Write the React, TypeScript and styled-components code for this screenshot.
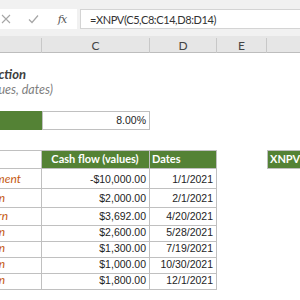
import React from "react";
import styled, { createGlobalStyle } from "styled-components";

const GREEN = "#548235";
const GRID = "#c0c0c0";

const GlobalStyle = createGlobalStyle`
  html, body { margin: 0; padding: 0; background: #ffffff; }
  body { font-family: Lato, "Open Sans", sans-serif; width: 300px; height: 300px; overflow: hidden; }
`;

const Page = styled.div`
  width: 300px;
  height: 300px;
  overflow: hidden;
  display: flex;
  flex-direction: column;
`;

const FormulaBar = styled.div`
  height: 36px;
  background: #f1f1f1;
  display: flex;
  align-items: flex-start;
  padding-top: 9px;
  box-sizing: border-box;
`;

const IconBox = styled.div`
  width: 77px;
  height: 20px;
  background: #ffffff;
  display: flex;
  align-items: center;
  justify-content: flex-start;
`;

const IconSlot = styled.div<{ $w: number }>`
  width: ${(p) => p.$w}px;
  display: flex;
  align-items: center;
  justify-content: center;
`;

const Fx = styled.span`
  font-family: "DejaVu Serif", "Liberation Serif", serif;
  font-style: italic;
  font-size: 11px;
  color: #555555;
  letter-spacing: -1px;
`;

const FormulaInput = styled.div`
  flex: 1;
  height: 20px;
  margin-left: 3px;
  background: #ffffff;
  border: 1px solid #d4d4d4;
  border-right: none;
  box-sizing: border-box;
  display: flex;
  align-items: center;
  padding-left: 9px;
  font-size: 11px;
  letter-spacing: -0.4px;
  color: #333333;
  white-space: nowrap;
`;

const COLS = "42px 108px 67px 50px 1fr";

const HeaderRow = styled.div`
  display: grid;
  grid-template-columns: ${COLS};
  height: 17px;
  background: #e6e6e6;
  border-bottom: 1px solid #bdbdbd;
  box-sizing: border-box;
`;

const ColHead = styled.div`
  border-right: 1px solid #c8c8c8;
  margin: 2px 0 0 0;
  display: flex;
  align-items: center;
  justify-content: center;
  font-size: 12px;
  color: #444444;
  &:last-child { border-right: none; }
`;

const Row = styled.div<{ $h: number }>`
  display: grid;
  grid-template-columns: ${COLS};
  height: ${(p) => p.$h}px;
`;

const Cell = styled.div<{ $fill?: string; $r?: boolean; $b?: boolean; $t?: boolean; $l?: boolean }>`
  box-sizing: border-box;
  background: ${(p) => p.$fill || "transparent"};
  border-right: ${(p) => (p.$r ? `1px solid ${GRID}` : "none")};
  border-bottom: ${(p) => (p.$b ? `1px solid ${GRID}` : "none")};
  border-top: ${(p) => (p.$t ? `1px solid ${GRID}` : "none")};
  border-left: ${(p) => (p.$l ? `1px solid ${GRID}` : "none")};
  display: flex;
  align-items: flex-end;
  padding: 0 3px 2px 3px;
  font-size: 12px;
  line-height: 14px;
  color: #222222;
  white-space: nowrap;
  overflow: hidden;
`;

const NumberCell = styled(Cell)`
  justify-content: flex-end;
  font-family: "Liberation Sans", Arial, sans-serif;
  font-size: 10.5px;
  color: #1e1e1e;
`;

const HeadCell = styled(Cell)<{ $center?: boolean }>`
  color: #ffffff;
  font-weight: 700;
  font-size: 11px;
  padding-left: 2px;
  justify-content: ${(p) => (p.$center ? "center" : "flex-start")};
`;

const LabelCell = styled(Cell)<{ $end: number }>`
  justify-content: flex-end;
  padding-left: 0;
  padding-right: ${(p) => 41 - p.$end}px;
  color: #c65911;
  font-style: italic;
`;

const Overhang = styled.div<{ $end: number }>`
  grid-column: 1 / span 3;
  width: ${(p) => p.$end}px;
  display: flex;
  justify-content: flex-end;
  align-items: flex-end;
  overflow: hidden;
  white-space: nowrap;
  padding-bottom: 1px;
`;

const Title = styled.span`
  font-weight: 700;
  font-style: italic;
  font-size: 13px;
  color: #404040;
`;

const Subtitle = styled.span`
  font-style: italic;
  font-size: 12.5px;
  color: #7f7f7f;
`;

const data = [
  { label: "Initial investment", end: 21, value: "-$10,000.00", date: "1/1/2021", h: 20 },
  { label: "Return", end: 5, value: "$2,000.00", date: "2/1/2021", h: 19 },
  { label: "Return", end: 8, value: "$3,692.00", date: "4/20/2021", h: 18 },
  { label: "Return", end: 5, value: "$2,600.00", date: "5/28/2021", h: 16 },
  { label: "Return", end: 5, value: "$1,300.00", date: "7/19/2021", h: 16 },
  { label: "Return", end: 5, value: "$1,000.00", date: "10/30/2021", h: 16 },
  { label: "Return", end: 5, value: "$1,800.00", date: "12/1/2021", h: 16 },
];

export default function App() {
  return (
    <Page>
      <GlobalStyle />
      <FormulaBar>
        <IconBox>
          <IconSlot $w={12}>
            <svg width="10" height="10" viewBox="0 0 10 10">
              <path d="M1 1 L9 9 M9 1 L1 9" stroke="#a6a6a6" strokeWidth="1.1" fill="none" />
            </svg>
          </IconSlot>
          <IconSlot $w={42}>
            <svg width="11" height="10" viewBox="0 0 11 10">
              <path d="M1 5.5 L4 8.5 L10 1.5" stroke="#a6a6a6" strokeWidth="1.2" fill="none" />
            </svg>
          </IconSlot>
          <IconSlot $w={16}>
            <Fx>fx</Fx>
          </IconSlot>
        </IconBox>
        <FormulaInput>=XNPV(C5,C8:C14,D8:D14)</FormulaInput>
      </FormulaBar>
      <HeaderRow>
        <ColHead />
        <ColHead>C</ColHead>
        <ColHead>D</ColHead>
        <ColHead>E</ColHead>
        <ColHead />
      </HeaderRow>
      <Row $h={14} />
      <Row $h={16}>
        <Overhang $end={26}>
          <Title>XNPV function</Title>
        </Overhang>
      </Row>
      <Row $h={15}>
        <Overhang $end={53}>
          <Subtitle>XNPV(rate, values, dates)</Subtitle>
        </Overhang>
      </Row>
      <Row $h={13} />
      <Row $h={19}>
        <Cell $fill={GREEN} />
        <NumberCell $t $b $r $l>8.00%</NumberCell>
      </Row>
      <Row $h={20} />
      <Row $h={19}>
        <Cell $t $b $r />
        <HeadCell $fill={GREEN} $t $b $r $center>Cash flow (values)</HeadCell>
        <HeadCell $fill={GREEN} $t $b $r>Dates</HeadCell>
        <Cell />
        <HeadCell $fill={GREEN} $t $b $l>XNPV</HeadCell>
      </Row>
      {data.map((d) => (
        <Row $h={d.h} key={d.date}>
          <LabelCell $end={d.end} $b $r>{d.label}</LabelCell>
          <NumberCell $b $r>{d.value}</NumberCell>
          <NumberCell $b $r>{d.date}</NumberCell>
        </Row>
      ))}
    </Page>
  );
}
